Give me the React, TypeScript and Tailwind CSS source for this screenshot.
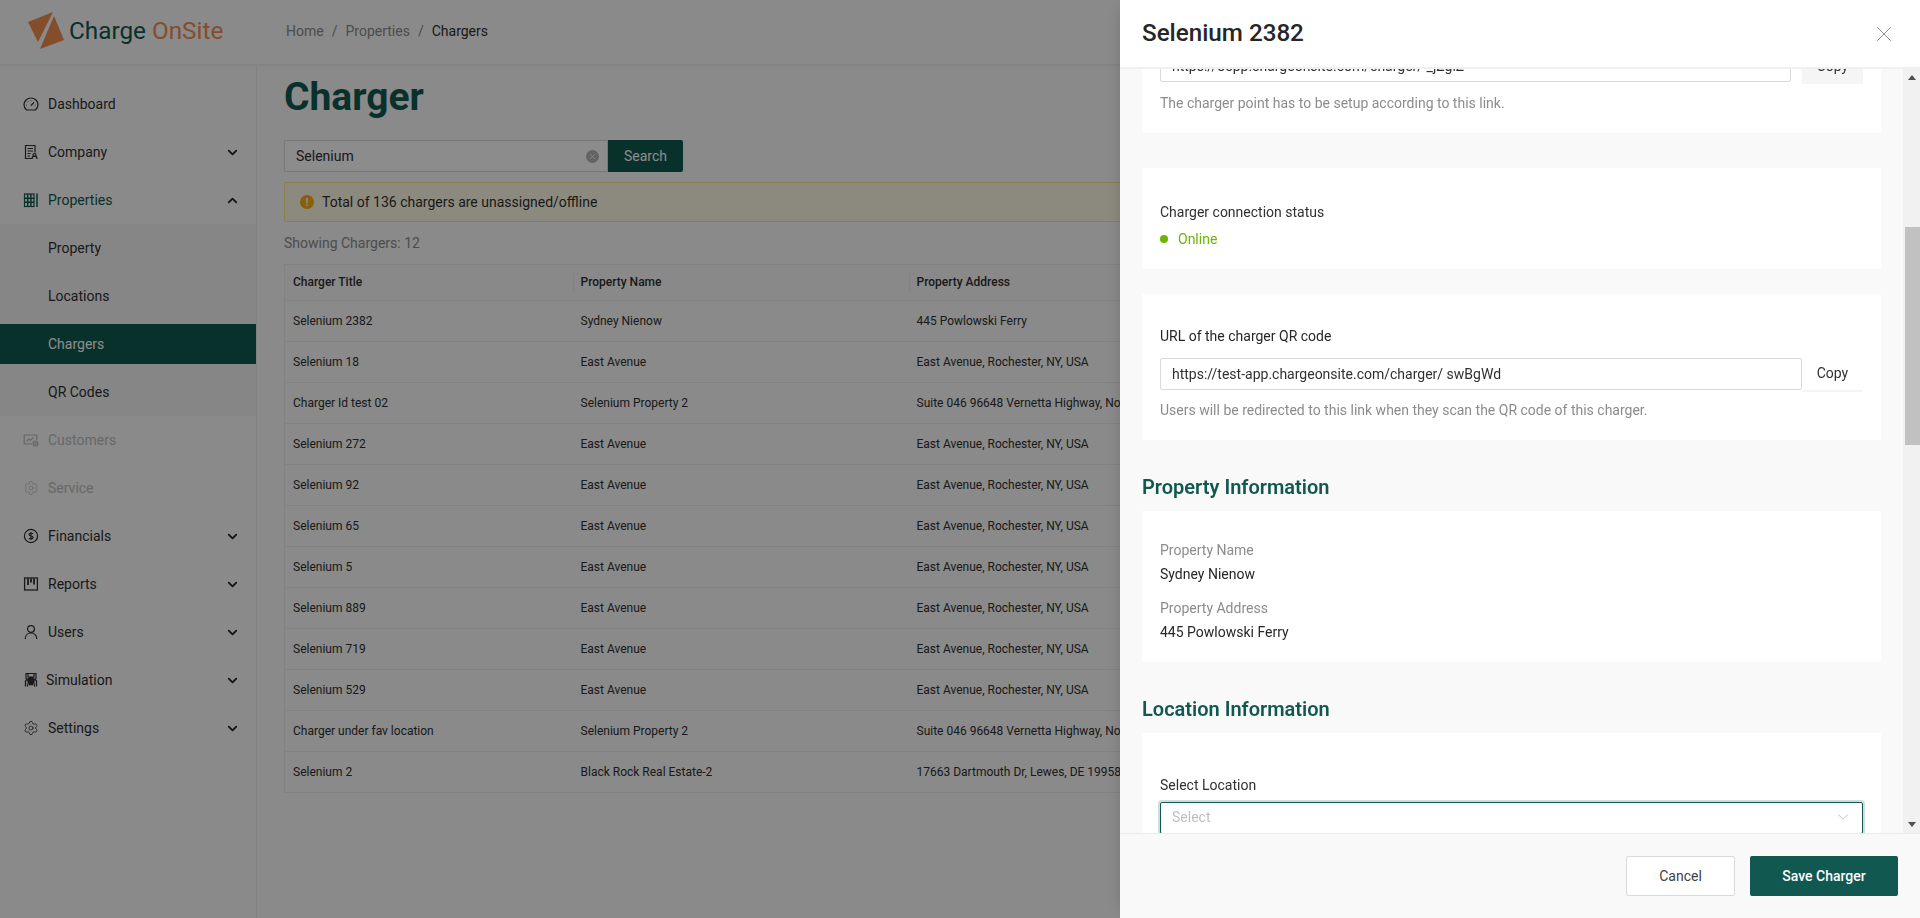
import React from "react";
import { ChevronDown, ChevronUp, Settings, X } from "lucide-react";

const Svg = ({ children, className = "" }: { children: React.ReactNode; className?: string }) => (
  <svg width="16" height="16" viewBox="0 0 16 16" fill="none" stroke="currentColor" strokeWidth="1.2" className={`shrink-0 ${className}`}>
    {children}
  </svg>
);

const GaugeIcon = () => (
  <Svg>
    <path d="M3.6 14C2 12.800 1 10.900 1 8.800 1 5 4.100 2 8 2s7 3 7 6.800c0 2.100-1 4-2.600 5.200z" />
    <path d="M8 9.500l3-3.200M3.500 9H3M13 9h-.5M4.800 5.600l.4.4M8 4v.6" />
  </Svg>
);
const CompanyIcon = () => (
  <Svg>
    <path d="M9 14.500H2.500V1.500h9.500v7" />
    <path d="M4.500 4.500h5.500M4.500 7h5.500M4.500 9.500h3M4.500 12h2.500" />
    <circle cx="11.500" cy="11" r="1.500" />
    <path d="M9 15c0-1.800 1-2.800 2.500-2.800S14 13.200 14 15" />
  </Svg>
);
const BuildingIcon = () => (
  <Svg>
    <rect x="1.500" y="2" width="9.500" height="12.500" />
    <path d="M1.500 6.200H11M1.500 10.300H11M4.700 2v12.500M7.900 2v12.500M14 1.500v13.500" strokeWidth="1.500" />
  </Svg>
);
const CustomersIcon = () => (
  <Svg>
    <path d="M9 12H1.200V3h12.600v5" />
    <path d="M3.500 9.500l2.500-2.500 1.500 1.300 3-3" />
    <circle cx="12.500" cy="11.500" r="2.500" />
    <circle cx="12.500" cy="11.500" r=".7" />
  </Svg>
);
const DollarIcon = () => (
  <Svg>
    <circle cx="8" cy="8" r="6.600" />
    <path d="M10 5.900C9.600 5.200 8.900 5 8 5 6.900 5 6 5.500 6 6.500S7 7.800 8 8s2 .6 2 1.600S9.100 11 8 11c-.9 0-1.700-.3-2.100-1M8 4v8" />
  </Svg>
);
const ReportsIcon = () => (
  <Svg>
    <rect x="1.600" y="2" width="12.800" height="12" strokeWidth="1.300" />
    <path d="M5 2.500v6.500M8 2.500v4M11 2.500v6" strokeWidth="1.800" />
  </Svg>
);
const UserIcon = () => (
  <Svg>
    <circle cx="8" cy="5" r="3.400" />
    <path d="M2.200 15c0-3.600 2.500-6 5.800-6s5.800 2.400 5.800 6" />
  </Svg>
);
const SimulationIcon = () => (
  <Svg>
    <path d="M3 7V1.500h10V7M5 1.500v3.500h6V1.500" />
    <circle cx="8" cy="8.500" r="3.200" fill="currentColor" />
    <path d="M4.500 6.500L2.500 9v5.500M11.500 6.500L13.500 9v5.500M5 11l-.5 3.500M11 11l.5 3.500M6 12.500h4" strokeWidth="1.300" />
  </Svg>
);
const GearIcon = () => <Settings size={16} strokeWidth={1.2} className="shrink-0" />;

type Item = {
  label: string;
  icon?: React.ReactNode;
  chevron?: "down" | "up";
  tone?: string;
  textClass?: string;
};

const NavRow = ({ label, icon, chevron, tone = "text-[#303030]", textClass = "ml-[9px]" }: Item) => (
  <div className={`my-1 flex h-10 items-center pl-[23px] pr-[16px] text-sm ${tone}`}>
    <span className="flex w-[16px] shrink-0 items-center justify-center">{icon}</span>
    <span className={`flex-1 ${textClass}`}>{label}</span>
    {chevron === "down" && <ChevronDown size={15} strokeWidth={3} className="text-[#262626]" />}
    {chevron === "up" && <ChevronUp size={15} strokeWidth={3} className="text-[#262626]" />}
  </div>
);

const SubRow = ({ label, active }: { label: string; active?: boolean }) => (
  <div className={`my-1 flex h-10 items-center pl-[48px] text-sm ${active ? "bg-[#115950] text-white" : "text-[#303030]"}`}>
    {label}
  </div>
);

const Sidebar = () => (
  <aside className="flex w-[257px] shrink-0 flex-col border-r border-[#ededed] pt-[14px]">
    <NavRow label="Dashboard" icon={<GaugeIcon />} />
    <NavRow label="Company" icon={<CompanyIcon />} chevron="down" />
    <NavRow label="Properties" icon={<BuildingIcon />} chevron="up" tone="text-[#115950]" />
    <div className="flex flex-col bg-[#f5f5f5]">
      <SubRow label="Property" />
      <SubRow label="Locations" />
      <SubRow label="Chargers" active />
      <SubRow label="QR Codes" />
    </div>
    <NavRow label="Customers" icon={<CustomersIcon />} tone="text-[#bdbdbd]" />
    <NavRow label="Service" icon={<GearIcon />} tone="text-[#bdbdbd]" />
    <NavRow label="Financials" icon={<DollarIcon />} chevron="down" />
    <NavRow label="Reports" icon={<ReportsIcon />} chevron="down" />
    <NavRow label="Users" icon={<UserIcon />} chevron="down" />
    <NavRow label="Simulation" icon={<SimulationIcon />} chevron="down" textClass="ml-[7px]" />
    <NavRow label="Settings" icon={<GearIcon />} chevron="down" />
  </aside>
);

const rows: [string, string, string][] = [
  ["Selenium 2382", "Sydney Nienow", "445 Powlowski Ferry"],
  ["Selenium 18", "East Avenue", "East Avenue, Rochester, NY, USA"],
  ["Charger Id test 02", "Selenium Property 2", "Suite 046 96648 Vernetta Highway, North Kaylee"],
  ["Selenium 272", "East Avenue", "East Avenue, Rochester, NY, USA"],
  ["Selenium 92", "East Avenue", "East Avenue, Rochester, NY, USA"],
  ["Selenium 65", "East Avenue", "East Avenue, Rochester, NY, USA"],
  ["Selenium 5", "East Avenue", "East Avenue, Rochester, NY, USA"],
  ["Selenium 889", "East Avenue", "East Avenue, Rochester, NY, USA"],
  ["Selenium 719", "East Avenue", "East Avenue, Rochester, NY, USA"],
  ["Selenium 529", "East Avenue", "East Avenue, Rochester, NY, USA"],
  ["Charger under fav location", "Selenium Property 2", "Suite 046 96648 Vernetta Highway, North Kaylee"],
  ["Selenium 2", "Black Rock Real Estate-2", "17663 Dartmouth Dr, Lewes, DE 19958, USA"],
];

const Main = () => (
  <main className="flex-1 pl-[27px] pr-[20px]">
    <h1 className="mt-[8px] h-[47px] text-[39px] font-bold leading-[47px] text-[#115950]">Charger</h1>
    <div className="mt-[19px] flex h-8 w-[399px]">
      <div className="flex flex-1 items-center rounded-l-[2px] border border-[#d9d9d9] bg-white pl-[11px] pr-[8px] text-sm text-[#303030]">
        <span className="flex-1">Selenium</span>
        <span className="flex h-[13px] w-[13px] items-center justify-center rounded-full bg-[#b5b5b5] text-white">
          <X size={9} strokeWidth={2} />
        </span>
      </div>
      <button className="w-[75px] rounded-r-[2px] bg-[#115950] text-sm text-white">Search</button>
    </div>
    <div className="mt-[10px] flex h-10 items-center rounded-[2px] border border-[#ffe58f] bg-[#fffbe6] pl-[15px] text-sm text-[#303030]">
      <span className="flex h-[14px] w-[14px] items-center justify-center rounded-full bg-[#faad14] text-[11px] font-bold leading-none text-white">!</span>
      <span className="ml-[8px]">Total of 136 chargers are unassigned/offline</span>
    </div>
    <p className="mt-[10px] h-[22px] text-sm leading-[22px] text-[#8c8c8c]">Showing Chargers: 12</p>
    <table className="mt-[10px] w-full table-fixed border-collapse border border-[#ededed] text-left text-xs text-[#303030]">
      <colgroup>
        <col className="w-[288px]" />
        <col className="w-[336px]" />
        <col />
      </colgroup>
      <thead>
        <tr className="h-[36px] bg-[#fafafa] font-medium">
          {["Charger Title", "Property Name", "Property Address"].map((h, i) => (
            <th key={h} className="relative pb-[2px] pl-[8px] font-medium">
              {i > 0 && <span className="absolute left-0 top-[9px] h-[18px] w-px bg-[#ededed]" />}
              {h}
            </th>
          ))}
        </tr>
      </thead>
      <tbody>
        {rows.map((r, i) => (
          <tr key={i} className="h-[41px] border-t border-[#ededed]">
            {r.map((c, j) => (
              <td key={j} className="truncate pl-[8px]">{c}</td>
            ))}
          </tr>
        ))}
      </tbody>
    </table>
  </main>
);

const Card = ({ className = "", children }: { className?: string; children: React.ReactNode }) => (
  <section className={`rounded-[2px] bg-white px-[18px] ${className}`}>{children}</section>
);

const Drawer = () => (
  <div className="fixed bottom-0 right-0 top-0 z-20 flex w-[800px] flex-col bg-[#f9f9f9] font-['Roboto',sans-serif] shadow-[-6px_0_16px_-8px_rgba(0,0,0,0.2)]">
    <header className="relative z-10 flex h-[69px] shrink-0 items-center justify-between border-b-2 border-[#f0f0f0] bg-white pl-[22px] pr-[23px]">
      <h2 className="text-[24.2px] font-medium text-[#262626]">Selenium 2382</h2>
      <X size={26} strokeWidth={0.9} className="text-[#8c8c8c]" />
    </header>
    <div className="flex min-h-0 flex-1 overflow-hidden">
      <div className="min-w-0 flex-1 px-[22px] text-sm text-[#303030]">
        <Card className="-mt-[19px] pb-[19px]">
          <div className="flex items-start">
            <div className="flex h-8 w-[631px] items-center rounded-[2px] border border-[#d9d9d9] pl-[11px]">https://ocpp.chargeonsite.com/charger/ _jZgiZ</div>
            <div className="ml-[11px] flex h-[34px] w-[61px] items-center justify-center bg-[#f5f5f5] pb-[2px]">Copy</div>
          </div>
          <p className="mt-[8px] leading-[22px] text-[#8c8c8c]">The charger point has to be setup according to this link.</p>
        </Card>
        <Card className="mt-[35px] pb-[19px] pt-[33px]">
          <p className="leading-[22px]">Charger connection status</p>
          <div className="mt-[5px] flex items-center leading-[22px] text-[#6bb600]">
            <span className="h-2 w-2 rounded-full bg-[#6bb600]" />
            <span className="ml-[10px]">Online</span>
          </div>
        </Card>
        <Card className="mt-[25px] pb-[19px] pt-[31px]">
          <p className="leading-[22px] text-[#262626]">URL of the charger QR code</p>
          <div className="mt-[11px] flex items-start">
            <div className="flex h-8 w-[642px] items-center rounded-[2px] border border-[#d9d9d9] pl-[11px]">https://test-app.chargeonsite.com/charger/ swBgWd</div>
            <div className="flex h-[34px] w-[61px] items-center justify-center border-b-2 border-[#f5f5f5] pb-[2px]">Copy</div>
          </div>
          <p className="mt-[7px] leading-[22px] text-[#8c8c8c]">Users will be redirected to this link when they scan the QR code of this charger.</p>
        </Card>
        <h3 className="mt-[33px] text-xl font-semibold leading-[28px] text-[#115950]">Property Information</h3>
        <Card className="mt-[10px] pb-[19px] pt-[28px]">
          <p className="leading-[22px] text-[#8c8c8c]">Property Name</p>
          <p className="mt-[2px] leading-[22px] text-[#262626]">Sydney Nienow</p>
          <p className="mt-[12px] leading-[22px] text-[#8c8c8c]">Property Address</p>
          <p className="mt-[2px] leading-[22px] text-[#262626]">445 Powlowski Ferry</p>
        </Card>
        <h3 className="mt-[33px] text-xl font-semibold leading-[28px] text-[#115950]">Location Information</h3>
        <Card className="mt-[10px] pb-[19px] pt-[41px]">
          <p className="leading-[22px]">Select Location</p>
          <div className="mt-[6px] flex h-8 items-center justify-between rounded-[2px] border border-[#115950] pb-[2px] pl-[11px] pr-[10px] text-[#bfbfbf] shadow-[0_0_0_2px_rgba(17,89,80,0.2)]">
            <span>Select</span>
            <ChevronDown size={18} strokeWidth={0.9} className="text-[#a0a0a0]" />
          </div>
        </Card>
      </div>
      <div className="flex w-[17px] shrink-0 flex-col items-end bg-[#f1f1f1]">
        <div className="flex h-[17px] w-full items-center justify-center">
          <span className="h-0 w-0 border-x-[4px] border-b-[5px] border-x-transparent border-b-[#505050]" />
        </div>
        <div className="mt-[141px] h-[218px] w-[15px] bg-[#c1c1c1]" />
        <div className="flex-1" />
        <div className="flex h-[17px] w-full items-center justify-center">
          <span className="h-0 w-0 border-x-[4px] border-t-[5px] border-x-transparent border-t-[#505050]" />
        </div>
      </div>
    </div>
    <footer className="flex h-[85px] shrink-0 items-start justify-end gap-[15px] border-t border-[#ececec] bg-[#f9f9f9] pr-[22px] pt-[22px] text-sm">
      <button className="h-10 w-[109px] rounded-[2px] border border-[#d9d9d9] bg-white text-[#404040]">Cancel</button>
      <button className="h-10 w-[148px] rounded-[2px] bg-[#115950] font-medium text-white">Save Charger</button>
    </footer>
  </div>
);

export default function App() {
  return (
    <div className="flex h-[918px] w-[1920px] flex-col overflow-hidden bg-[#fbfbfb] font-['Roboto',sans-serif]">
      <header className="flex h-[66px] shrink-0 items-center border-b-2 border-[#f0f0f0] pb-[2px]">
        <div className="flex w-[286px] shrink-0 items-center pl-[28px]">
          <svg width="37" height="38" viewBox="0 0 37 38" className="shrink-0">
            <path d="M0 10L25 0 10 30z" fill="#f08c50" />
            <path d="M26 4L36 28 12 37z" fill="#f08c50" />
          </svg>
          <span className="ml-[4px] text-[24.3px] leading-none text-[#115950]">
            Charge <span className="text-[#f08c50]">OnSite</span>
          </span>
        </div>
        <nav className="flex items-center text-sm text-[#8c8c8c]">
          <span>Home</span>
          <span className="mx-2">/</span>
          <span>Properties</span>
          <span className="mx-2">/</span>
          <span className="text-[#303030]">Chargers</span>
        </nav>
      </header>
      <div className="flex min-h-0 flex-1">
        <Sidebar />
        <Main />
      </div>
      <div className="fixed inset-0 z-10 bg-black/45" />
      <Drawer />
    </div>
  );
}
